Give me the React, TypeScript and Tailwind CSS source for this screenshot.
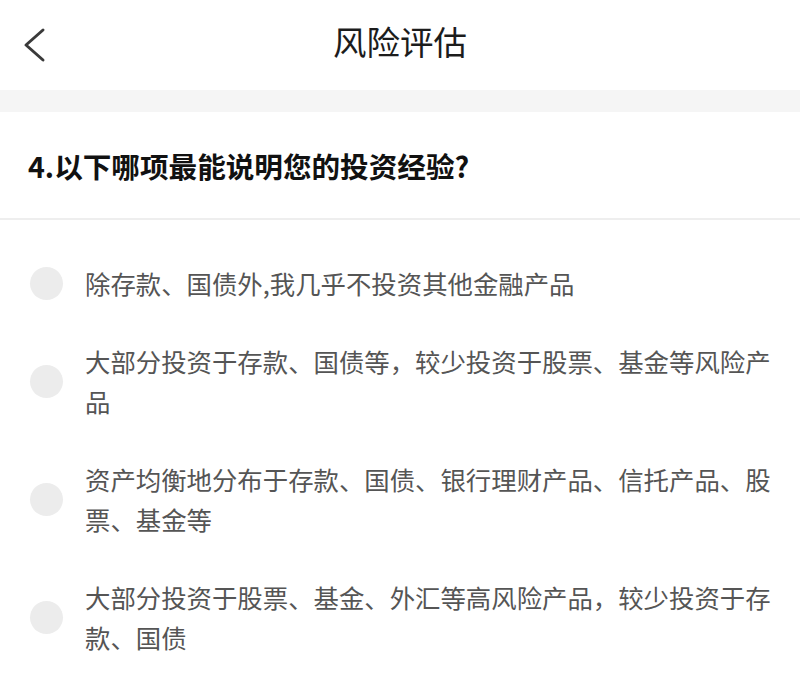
const options = [
  '除存款、国债外,我几乎不投资其他金融产品',
  '大部分投资于存款、国债等，较少投资于股票、基金等风险产品',
  '资产均衡地分布于存款、国债、银行理财产品、信托产品、股票、基金等',
  '大部分投资于股票、基金、外汇等高风险产品，较少投资于存款、国债',
];

export default function App() {
  return (
    <div
      className="w-[800px] h-[688px] bg-white overflow-hidden"
      style={{ fontFamily: '"Noto Sans CJK SC", "Noto Sans", sans-serif' }}
    >
      <div className="h-[90px] grid grid-cols-[1fr_auto_1fr] items-center">
        <div className="pl-[22px] flex items-center">
          <svg width="26" height="36" viewBox="0 0 26 36" fill="none">
            <polyline
              points="21,3 4,18 21,33"
              stroke="#3a3a3a"
              strokeWidth="3"
              strokeLinecap="round"
              strokeLinejoin="round"
            />
          </svg>
        </div>
        <h1 className="text-[33.5px] leading-none text-[#1c1c1c] pb-[8px]">风险评估</h1>
        <div />
      </div>

      <div className="h-[22px] bg-[#f5f5f5]" />

      <div className="pl-[28px] pt-[36px] pb-[34px] border-b-2 border-[#eeeeee]">
        <h2 className="text-[28.6px] leading-[36px] font-bold text-[#111]">4.以下哪项最能说明您的投资经验?</h2>
      </div>

      <div className="pt-[24px]">
        {options.map((text, i) => (
          <div key={i} className="flex items-center pl-[30px] pr-[20px] py-[19px]">
            <span className="w-[33px] h-[33px] rounded-full bg-[#ececec] shrink-0" />
            <p className="ml-[22px] text-[25.4px] leading-[40px] text-[#555]">{text}</p>
          </div>
        ))}
      </div>
    </div>
  );
}
